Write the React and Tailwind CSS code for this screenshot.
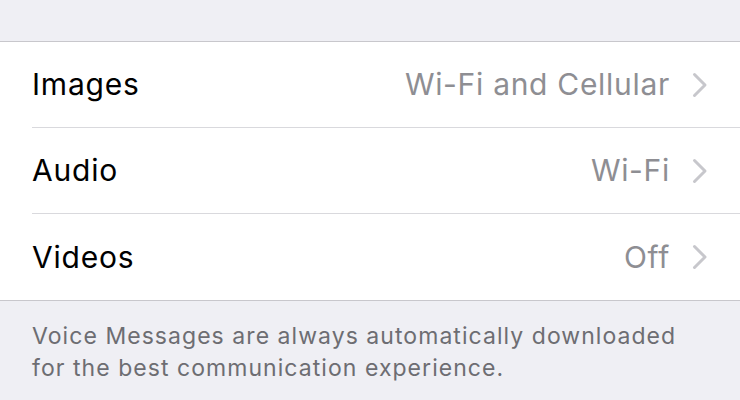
const rows = [
  { label: 'Images', value: 'Wi-Fi and Cellular' },
  { label: 'Audio', value: 'Wi-Fi' },
  { label: 'Videos', value: 'Off' },
];

const Chevron = () => (
  <svg width="16" height="26" viewBox="0 0 16 26" className="ml-[22px] shrink-0">
    <path d="M2.5 2.5 L13 13 L2.5 23.5" fill="none" stroke="#c7c7cc" strokeWidth="3" strokeLinecap="round" strokeLinejoin="round" />
  </svg>
);

export default function App() {
  return (
    <div className="w-[740px] h-[400px] overflow-hidden bg-[#efeff4] font-['Inter',sans-serif]">
      <div className="h-[41px]" />
      <div className="bg-white border-y border-[#c8c7cc]">
        {rows.map((r, i) => (
          <div key={r.label} className="pl-[32px]">
            <div className={`flex items-center h-[86px] pr-[32px] ${i < rows.length - 1 ? 'border-b border-[#d9d9dd]' : ''}`}>
              <span className="flex-1 text-[30px] text-black tracking-[0.8px]">{r.label}</span>
              <span className="text-[30px] text-[#8e8e93] tracking-[0.7px]">{r.value}</span>
              <Chevron />
            </div>
          </div>
        ))}
      </div>
      <div className="px-[32px] pt-[19px] text-[23px] leading-[32px] tracking-[1.05px] text-[#6d6d72]">
        Voice Messages are always automatically downloaded<br />
        for the best communication experience.
      </div>
    </div>
  );
}
